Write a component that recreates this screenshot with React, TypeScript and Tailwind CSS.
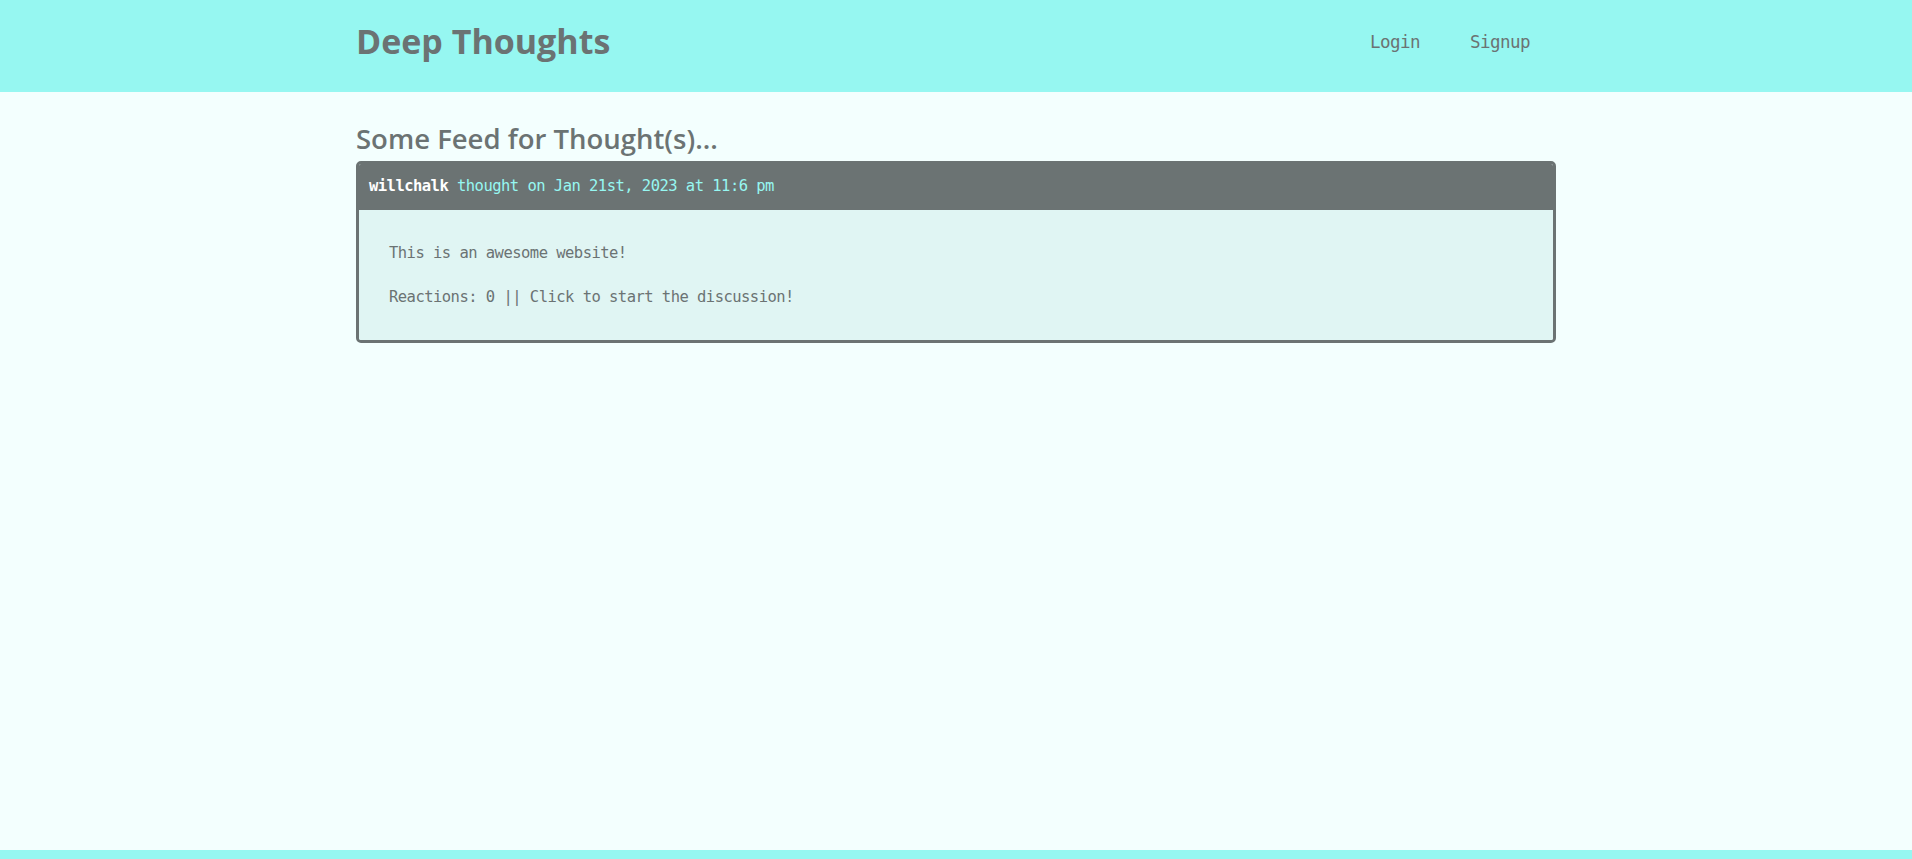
import React from "react";

const mono = "font-['DejaVu_Sans_Mono','Liberation_Mono',monospace]";
const sans = "font-['Open_Sans','Noto_Sans',sans-serif]";

export default function App() {
  return (
    <div className="bg-[#f3fffe] text-[#6b7373]">
      <div className="min-h-[850px] flex flex-col">
        <header className="bg-[#96f7f1] h-[92px]">
          <div className="w-[1200px] mx-auto h-full flex items-center justify-between">
            <h1 className={`${sans} text-[34px] font-bold text-[#6b7373] leading-none pb-[10px]`}>
              Deep Thoughts
            </h1>
            <nav className={`${mono} text-[17.5px] tracking-[-0.53px] flex items-center gap-[50px] pr-[26px] pb-[7px]`}>
              <a className="text-[#6b7373]">Login</a>
              <a className="text-[#6b7373]">Signup</a>
            </nav>
          </div>
        </header>
        <main className="w-[1200px] mx-auto flex-1 pt-[33px]">
          <h3 className={`${sans} text-[27.5px] font-semibold leading-none h-[36px]`}>
            Some Feed for Thought(s)...
          </h3>
          <div className={`${mono} text-[15.5px] tracking-[-0.53px] border-[3px] border-[#6b7373] rounded-[5px] overflow-hidden`}>
            <div className="bg-[#6b7373] h-[46px] flex items-center px-[10px]">
              <span className="font-bold text-white">willchalk</span>
              <span className="text-[#96f7f1]">&nbsp;thought on Jan 21st, 2023 at 11:6 pm</span>
            </div>
            <div className="bg-[#e0f5f3] px-[30px] pt-[34px] pb-[34px] text-[#6b7373]">
              <p className="leading-[18px]">This is an awesome website!</p>
              <p className="leading-[18px] mt-[26px]">Reactions: 0 || Click to start the discussion!</p>
            </div>
          </div>
        </main>
      </div>
      <footer className="bg-[#96f7f1] h-[60px]"></footer>
    </div>
  );
}
